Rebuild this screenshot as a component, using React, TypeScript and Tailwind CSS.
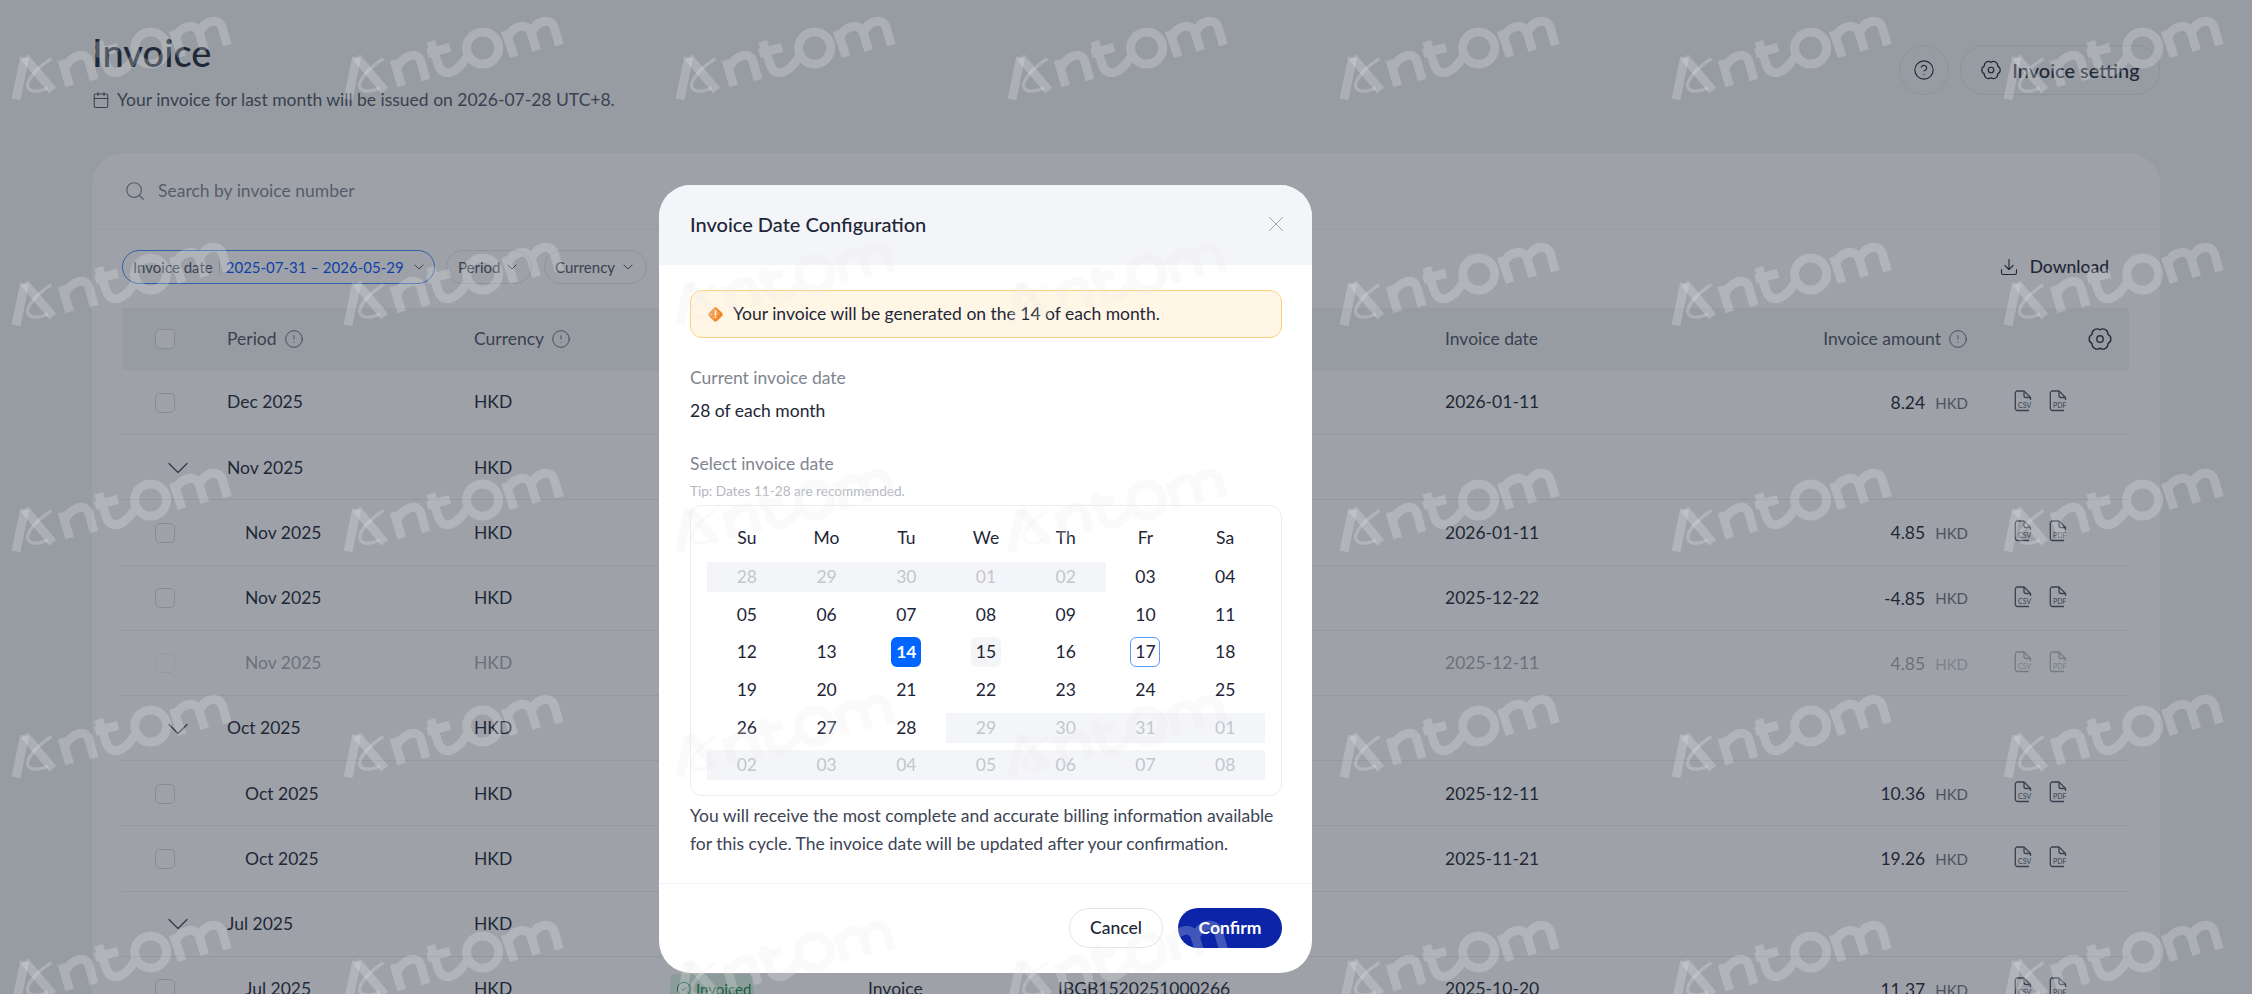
import React from 'react';
import { Calendar, Search, ChevronDown, X, CircleAlert, CircleHelp, CircleCheck, Download } from 'lucide-react';

type Row = {
  period: string;
  child?: boolean;
  group?: boolean;
  date?: string;
  amount?: string;
  dim?: boolean;
  extra?: boolean;
};

const rows: Row[] = [
  { period: 'Dec 2025', date: '2026-01-11', amount: '8.24' },
  { period: 'Nov 2025', group: true },
  { period: 'Nov 2025', child: true, date: '2026-01-11', amount: '4.85' },
  { period: 'Nov 2025', child: true, date: '2025-12-22', amount: '-4.85' },
  { period: 'Nov 2025', child: true, date: '2025-12-11', amount: '4.85', dim: true },
  { period: 'Oct 2025', group: true },
  { period: 'Oct 2025', child: true, date: '2025-12-11', amount: '10.36' },
  { period: 'Oct 2025', child: true, date: '2025-11-21', amount: '19.26' },
  { period: 'Jul 2025', group: true },
  { period: 'Jul 2025', child: true, date: '2025-10-20', amount: '11.37', extra: true },
];

const weekDays = ['Su', 'Mo', 'Tu', 'We', 'Th', 'Fr', 'Sa'];

const days = [
  '28', '29', '30', '01', '02', '03', '04',
  '05', '06', '07', '08', '09', '10', '11',
  '12', '13', '14', '15', '16', '17', '18',
  '19', '20', '21', '22', '23', '24', '25',
  '26', '27', '28', '29', '30', '31', '01',
  '02', '03', '04', '05', '06', '07', '08',
];

const isDisabled = (i: number) => i < 5 || i >= 31;

const rowGrid = 'grid grid-cols-[105px_247px_196px_198px_190px_387px_523px_1fr] items-center';

const Gear: React.FC<{ size: number; className?: string }> = ({ size, className }) => (
  <svg width={size} height={size} viewBox="0 0 24 24" fill="none" stroke="currentColor" strokeWidth="1.3" className={className}>
    <path d="M12 3.6A4.6 4.6 0 0 1 19.3 7.8A4.6 4.6 0 0 1 19.3 16.2A4.6 4.6 0 0 1 12 20.4A4.6 4.6 0 0 1 4.7 16.2A4.6 4.6 0 0 1 4.7 7.8A4.6 4.6 0 0 1 12 3.6Z" strokeLinejoin="round" />
    <circle cx="12" cy="12" r="3" />
  </svg>
);

const FileIcon: React.FC<{ label: string }> = ({ label }) => (
  <svg width="20" height="24" viewBox="0 0 20 24" fill="none" overflow="visible" className="text-[#4b5262] -mt-[3px]">
    <path d="M16 21.5H4.5A2.2 2.2 0 0 1 2.3 19.3V4.2A2.2 2.2 0 0 1 4.5 2H11L17.5 8.5V11" stroke="currentColor" strokeWidth="1.3" strokeLinejoin="round" />
    <path d="M11 2V6.5A2 2 0 0 0 13 8.5H17.5" stroke="currentColor" strokeWidth="1.3" />
    <text x="5" y="18.5" fontSize="7" fill="currentColor" fontFamily="Lato, sans-serif">{label}</text>
  </svg>
);

const WatermarkMark: React.FC = () => (
  <svg width="240" height="115" viewBox="0 0 720 345" fill="none" stroke="#ececec" strokeOpacity="0.25" strokeLinejoin="round" strokeWidth="27">
    <path d="M36 298L62 172" />
    <path d="M62 172L146 272" />
    <path d="M142 176C98 204 60 246 74 266C84 278 110 274 132 264" strokeWidth="10" />
    <path d="M197 258L174 180M182 206C196 170 246 146 256 188L270 240M284 124L306 192C320 236 360 222 392 172M274 160L342 142M392 144A48 48 0 1 0 488 144A48 48 0 1 0 392 144ZM534 170L508 92M516 112C530 76 576 66 586 100L602 152M586 100C600 60 646 50 656 86L670 136" />
  </svg>
);

const FilterPill: React.FC<{ label: string; className: string }> = ({ label, className }) => (
  <div className={`h-[34px] rounded-full border border-[#e3e5ea] flex items-center justify-between text-[15px] text-[#4b5262] ${className}`}>
    <span>{label}</span>
    <ChevronDown size={16} strokeWidth={1.5} />
  </div>
);

const TableRow: React.FC<{ row: Row }> = ({ row }) => (
  <div className={`${rowGrid} h-[65.2px] pt-px border-b border-[#e9ebf0] text-[#1e2637]`}>
    <div className="pl-[33px] flex items-center">
      {row.group ? (
        <ChevronDown size={36} strokeWidth={0.8} className="ml-[5px] text-[#3b4252]" />
      ) : (
        <span className={`w-[20px] h-[20px] rounded-[5px] border border-[#d5d8de] bg-white ${row.dim ? 'opacity-40' : ''}`} />
      )}
    </div>
    <div className={`${row.child ? 'pl-[18px]' : ''} ${row.dim ? 'opacity-40' : ''}`}>{row.period}</div>
    <div className={row.dim ? 'opacity-40' : ''}>HKD</div>
    <div>
      {row.extra && (
        <span className="inline-flex items-center gap-1 h-[30px] w-[84px] pl-[6px] rounded-[6px] bg-[#dff5e6] text-[#0f8a4a] text-[15px]">
          <CircleCheck size={16} strokeWidth={1.5} />
          Invoiced
        </span>
      )}
    </div>
    <div>{row.extra && 'Invoice'}</div>
    <div>{row.extra && 'IBGB1520251000266'}</div>
    <div className={row.dim ? 'opacity-40' : ''}>{row.date}</div>
    <div className={`pl-[45px] flex items-center gap-[15px] ${row.dim ? 'opacity-40' : ''}`}>
      {row.amount && (
        <>
          <FileIcon label="CSV" />
          <FileIcon label="PDF" />
        </>
      )}
    </div>
  </div>
);

const AmountRow: React.FC<{ row: Row }> = ({ row }) => (
  <div className="relative">
    <TableRow row={row} />
    {row.amount && (
      <div className={`absolute top-0 left-0 w-[1846px] h-full pt-px flex items-center justify-end gap-[10px] ${row.dim ? 'opacity-40' : ''}`}>
        <span className="text-[#1e2637]">{row.amount}</span>
        <span className="text-[15px] text-[#6b7280]">HKD</span>
      </div>
    )}
  </div>
);

const InvoiceModal: React.FC = () => (
  <div className="absolute inset-0 pl-[659px] pt-[185px]">
    <div className="w-[653px] h-[788px] rounded-[32px] bg-white overflow-hidden text-[#1e2637]">
      <div className="h-[80px] bg-[#f4f5f9] pl-[31px] pr-[30px] pb-[2px] flex items-center justify-between">
        <h2 className="text-xl font-medium text-[#1e2637]">Invoice Date Configuration</h2>
        <X size={26} strokeWidth={0.9} className="text-[#9ca0a8] -mr-[7px]" />
      </div>
      <div className="pl-[31px] pr-[30px] pt-[25px]">
        <div className="h-[48px] rounded-[12px] border border-[#ffcf80] bg-[#fff6e5] flex items-center pl-[16px] gap-[9px]">
          <svg width="17" height="17" viewBox="0 0 16 16">
            <rect x="2.6" y="2.6" width="10.8" height="10.8" rx="2" transform="rotate(45 8 8)" fill="#f5861f" />
            <rect x="7.3" y="4" width="1.4" height="5" fill="#fff" />
            <rect x="7.3" y="10" width="1.4" height="1.5" fill="#fff" />
          </svg>
          <span>Your invoice will be generated on the 14 of each month.</span>
        </div>
        <div className="mt-[28px] leading-6 text-[#7f8590]">Current invoice date</div>
        <div className="mt-[9px] leading-6">28 of each month</div>
        <div className="mt-[29px] leading-6 text-[#7f8590]">Select invoice date</div>
        <div className="mt-[7px] text-[13.6px] leading-4 text-[#b4b7be]">Tip: Dates 11-28 are recommended.</div>
        <div className="mt-[6px] h-[291px] rounded-[12px] border border-[#ebecf0] px-[16px] pt-[20px]">
          <div className="grid grid-cols-7 h-[24px] mb-[12px]">
            {weekDays.map(d => (
              <div key={d} className="text-center leading-6">{d}</div>
            ))}
          </div>
          <div className="grid grid-cols-7 gap-y-[7.7px]">
            {days.map((d, i) => (
              <div
                key={i}
                className={`h-[30px] flex items-center justify-center ${isDisabled(i) ? 'bg-[#f4f5f9] text-[#c3c6cc]' : ''}`}
              >
                {i === 16 ? (
                  <span className="w-[30px] h-[30px] rounded-[6px] bg-[#0066ff] text-white font-bold flex items-center justify-center">{d}</span>
                ) : i === 17 ? (
                  <span className="w-[30px] h-[30px] rounded-[6px] bg-[#f4f5f9] flex items-center justify-center">{d}</span>
                ) : i === 19 ? (
                  <span className="w-[30px] h-[30px] rounded-[6px] border border-[#5c9dff] flex items-center justify-center">{d}</span>
                ) : (
                  d
                )}
              </div>
            ))}
          </div>
        </div>
        <p className="mt-[6px] leading-7 text-[#3d4454]">
          You will receive the most complete and accurate billing information available for this cycle. The invoice date will be updated after your confirmation.
        </p>
      </div>
      <div className="mt-[25px] border-t border-[#f2f3f6] pl-[31px] pr-[30px] pt-[24px] flex justify-end gap-[15px]">
        <button className="w-[94px] h-[40px] rounded-full border border-[#e3e5ea] bg-white font-medium">Cancel</button>
        <button className="w-[104px] h-[40px] rounded-full bg-[#0b24a8] text-white font-bold">Confirm</button>
      </div>
    </div>
  </div>
);

export default function App() {
  return (
    <div className="relative h-[994px] overflow-hidden bg-[#f2f5f6] font-['Lato',sans-serif] text-[17.5px] text-[#1e2637]">
      <div className="pl-[92px] pr-[92px] pt-[32px]">
        {/* Header */}
        <div className="flex justify-between items-start">
          <div>
            <h1 className="text-[38px] leading-10 font-medium text-[#1e2637]">Invoice</h1>
            <div className="mt-[16px] flex items-center gap-[7px] leading-6 text-[#4b5262]">
              <Calendar size={18} strokeWidth={1.4} />
              <span>Your invoice for last month will be issued on 2026-07-28 UTC+8.</span>
            </div>
          </div>
          <div className="mt-[13px] flex items-center gap-[11px]">
            <div className="w-[50px] h-[50px] rounded-full border border-[#dfe2e8] flex items-center justify-center">
              <CircleHelp size={22} strokeWidth={1.2} />
            </div>
            <div className="w-[200px] h-[50px] rounded-full border border-[#dfe2e8] flex items-center justify-center gap-[10px] text-[20px] font-medium">
              <Gear size={22} />
              Invoice setting
            </div>
          </div>
        </div>

        {/* Table card */}
        <div className="mt-[41px] h-[900px] rounded-[32px] bg-white">
          <div className="h-[77px] border-b border-[#f2f3f6] pl-[32px] flex items-center gap-[12px] text-[#7f8590]">
            <Search size={22} strokeWidth={1.3} />
            <span>Search by invoice number</span>
          </div>
          <div className="pl-[30px] pt-[20px] pr-[31px]">
            <div className="flex items-center">
              <div className="w-[313px] h-[34px] rounded-full border border-[#3b8bff] flex items-center pl-[10px] text-[15px]">
                <span className="text-[#4b5262]">Invoice date</span>
                <span className="w-px h-[16px] bg-[#d5d8de] mx-[6px]" />
                <span className="text-[#0050ff] text-[15px]">2025-07-31 – 2026-05-29</span>
                <ChevronDown size={16} strokeWidth={1.5} className="ml-[7px] text-[#4b5262]" />
              </div>
              <FilterPill label="Period" className="ml-[11px] w-[86px] px-[11px]" />
              <FilterPill label="Currency" className="ml-[12px] w-[103px] px-[10px]" />
              <div className="ml-auto mr-[20px] flex items-center gap-[11px] text-[#1e2637] font-medium">
                <Download size={20} strokeWidth={1.3} />
                Download
              </div>
            </div>

            <div className={`${rowGrid} relative mt-[24px] h-[62px] bg-[#f3f4f7] text-[#4b5262]`}>
              <div className="pl-[33px]">
                <span className="block w-[20px] h-[20px] rounded-[5px] border border-[#d5d8de] bg-white" />
              </div>
              <div className="flex items-center gap-[7px]">Period <CircleAlert size={20} strokeWidth={1} /></div>
              <div className="flex items-center gap-[7px]">Currency <CircleAlert size={20} strokeWidth={1} /></div>
              <div />
              <div />
              <div />
              <div>Invoice date</div>
              <div />
              <div className="absolute right-[161px] top-0 h-full flex items-center gap-[7px]">
                Invoice amount <CircleAlert size={20} strokeWidth={1} />
              </div>
              <Gear size={26} className="absolute right-[16px] top-[18px] text-[#2b3344]" />
            </div>

            {rows.map((row, i) => (
              <AmountRow key={i} row={row} />
            ))}
          </div>
        </div>
      </div>

      {/* Dim layer */}
      <div className="absolute inset-0 bg-[#232b3a]/44" />

      <InvoiceModal />

      {/* Watermark over everything */}
      <div className="absolute inset-0 overflow-hidden pointer-events-none pl-[4px] grid grid-cols-[repeat(7,332px)] auto-rows-[226px]">
        {Array.from({ length: 35 }).map((_, i) => (
          <WatermarkMark key={i} />
        ))}
      </div>
    </div>
  );
}
